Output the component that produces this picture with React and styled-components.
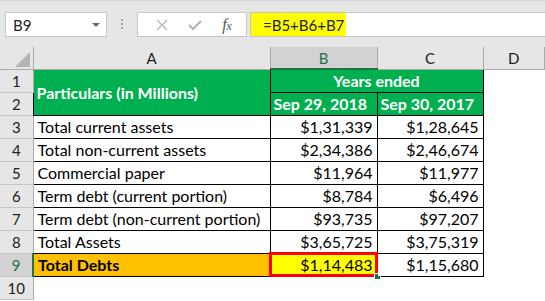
import React from "react";
import styled, { createGlobalStyle } from "styled-components";

const GlobalStyle = createGlobalStyle`
  body {
    margin: 0;
    background: #ffffff;
    font-family: Lato, "Liberation Sans", Arial, sans-serif;
  }
`;

const rows = [
  { label: "Total current assets", b: "$1,31,339", c: "$1,28,645" },
  { label: "Total non-current assets", b: "$2,34,386", c: "$2,46,674" },
  { label: "Commercial paper", b: "$11,964", c: "$11,977" },
  { label: "Term debt (current portion)", b: "$8,784", c: "$6,496" },
  { label: "Term debt (non-current portion)", b: "$93,735", c: "$97,207" },
  { label: "Total Assets", b: "$3,65,725", c: "$3,75,319" },
];

export default function App() {
  return (
    <Page>
      <GlobalStyle />
      <FormulaBar>
        <NameBox>
          <span>B9</span>
          <DropArrow />
        </NameBox>
        <Grip>
          <i />
          <i />
          <i />
        </Grip>
        <FnBox>
          <FnIcon>
            <svg width="12" height="12" viewBox="0 0 12 12">
              <path d="M1 1 L11 11 M11 1 L1 11" stroke="#b3b3b3" strokeWidth="1.3" fill="none" />
            </svg>
          </FnIcon>
          <FnIcon>
            <svg width="14" height="12" viewBox="0 0 14 12">
              <path d="M1 6 L5 10 L13 2" stroke="#b3b3b3" strokeWidth="2" fill="none" />
            </svg>
          </FnIcon>
          <Fx>
            f<small>x</small>
          </Fx>
        </FnBox>
        <FormulaInput>
          <FormulaText>=B5+B6+B7</FormulaText>
        </FormulaInput>
      </FormulaBar>

      <Sheet>
        <colgroup>
          <col style={{ width: 33 }} />
          <col style={{ width: 237 }} />
          <col style={{ width: 107 }} />
          <col style={{ width: 106 }} />
          <col />
        </colgroup>
        <thead>
          <tr>
            <Corner>
              <Triangle />
            </Corner>
            <ColHead>A</ColHead>
            <ColHead $active>B</ColHead>
            <ColHead>C</ColHead>
            <ColHead>D</ColHead>
          </tr>
        </thead>
        <tbody>
          <Row>
            <RowHead>1</RowHead>
            <GreenCell rowSpan={2}>Particulars (in Millions)</GreenCell>
            <GreenCell colSpan={2} $center>
              Years ended
            </GreenCell>
            <Blank />
          </Row>
          <Row>
            <RowHead>2</RowHead>
            <GreenCell>Sep 29, 2018</GreenCell>
            <GreenCell>Sep 30, 2017</GreenCell>
            <Blank />
          </Row>
          {rows.map((r, i) => (
            <Row key={r.label}>
              <RowHead>{i + 3}</RowHead>
              <Cell>{r.label}</Cell>
              <Cell $right>{r.b}</Cell>
              <Cell $right>{r.c}</Cell>
              <Blank />
            </Row>
          ))}
          <Row>
            <RowHead $active>9</RowHead>
            <Cell $fill="#ffc000" $bold>
              Total Debts
            </Cell>
            <Cell $right $fill="#ffff00">
              $1,14,483
              <Selection />
              <FillHandle />
            </Cell>
            <Cell $right>$1,15,680</Cell>
            <Blank />
          </Row>
          <Row>
            <RowHead>10</RowHead>
            <Blank />
            <Blank />
            <Blank />
            <Blank />
          </Row>
        </tbody>
      </Sheet>
    </Page>
  );
}

const Page = styled.div`
  width: 545px;
  height: 301px;
  overflow: hidden;
  background: #ffffff;
`;

const FormulaBar = styled.div`
  display: flex;
  align-items: flex-start;
  height: 47px;
  box-sizing: border-box;
  padding: 11px 0 0 5px;
  background: #e6e6e6;
  border-top: 1px solid #d6d6d6;
`;

const NameBox = styled.div`
  display: flex;
  align-items: center;
  justify-content: space-between;
  width: 102px;
  height: 25px;
  box-sizing: border-box;
  padding: 0 6px 0 7px;
  background: #ffffff;
  border: 1px solid #c6c6c6;
  font-size: 15px;
  color: #222;
`;

const DropArrow = styled.span`
  width: 0;
  height: 0;
  border-left: 4px solid transparent;
  border-right: 4px solid transparent;
  border-top: 4px solid #666;
`;

const Grip = styled.div`
  display: flex;
  flex-direction: column;
  gap: 2px;
  width: 30px;
  align-items: center;
  padding-top: 7px;

  i {
    width: 2px;
    height: 2px;
    background: #a6a6a6;
  }
`;

const FnBox = styled.div`
  display: flex;
  align-items: center;
  justify-content: space-around;
  width: 110px;
  height: 25px;
  box-sizing: border-box;
  padding: 0 4px 0 8px;
  background: #ffffff;
  border: 1px solid #c6c6c6;
`;

const FnIcon = styled.span`
  display: flex;
  align-items: center;
`;

const Fx = styled.span`
  font-family: "Liberation Serif", "Times New Roman", serif;
  font-style: italic;
  font-size: 16px;
  color: #555;

  small {
    font-size: 12px;
  }
`;

const FormulaInput = styled.div`
  flex: 1;
  height: 25px;
  margin-left: 3px;
  box-sizing: border-box;
  background: #ffffff;
  border-top: 1px solid #c6c6c6;
  border-bottom: 1px solid #c6c6c6;
  border-left: 1px solid #c6c6c6;
`;

const FormulaText = styled.span`
  display: inline-flex;
  align-items: center;
  height: 100%;
  width: 95px;
  box-sizing: border-box;
  padding-left: 12px;
  background: #ffff00;
  font-size: 15px;
  color: #222;
`;

const Sheet = styled.table`
  width: 545px;
  table-layout: fixed;
  border-collapse: collapse;
  font-size: 16px;
`;

const Corner = styled.th`
  position: relative;
  height: 21px;
  padding: 0;
  background: #e6e6e6;
  border-right: 1px solid #ababab;
  border-bottom: 1px solid #ababab;
`;

const Triangle = styled.span`
  position: absolute;
  right: 3px;
  bottom: 2px;
  width: 0;
  height: 0;
  border-left: 15px solid transparent;
  border-bottom: 15px solid #b4b4b4;
`;

const ColHead = styled.th`
  height: 21px;
  padding: 0;
  font-weight: normal;
  font-size: 15px;
  text-align: center;
  color: ${({ $active }) => ($active ? "#217346" : "#222")};
  background: ${({ $active }) => ($active ? "#d2d2d2" : "#e6e6e6")};
  border-right: 1px solid #ababab;
  border-bottom: ${({ $active }) =>
    $active ? "2px solid #217346" : "1px solid #ababab"};
`;

const Row = styled.tr`
  height: 23px;
`;

const RowHead = styled.td`
  padding: 0;
  text-align: center;
  font-size: 15px;
  color: ${({ $active }) => ($active ? "#217346" : "#222")};
  background: ${({ $active }) => ($active ? "#d2d2d2" : "#e6e6e6")};
  border-bottom: 1px solid #c6c6c6;
  border-right: ${({ $active }) =>
    $active ? "2px solid #217346" : "1px solid #ababab"};
`;

const GreenCell = styled.td`
  padding: 0 3px;
  background: #00b050;
  color: #ffffff;
  font-weight: bold;
  white-space: nowrap;
  text-align: ${({ $center }) => ($center ? "center" : "left")};
  border: 1px solid #000;
`;

const Cell = styled.td`
  position: relative;
  padding: 0 4px;
  white-space: nowrap;
  color: #000;
  text-align: ${({ $right }) => ($right ? "right" : "left")};
  font-weight: ${({ $bold }) => ($bold ? "bold" : "normal")};
  background: ${({ $fill }) => $fill || "#ffffff"};
  border: 1px solid #000;
`;

const Blank = styled.td`
  padding: 0;
`;

const Selection = styled.span`
  position: absolute;
  top: -2px;
  left: -2px;
  right: -1px;
  bottom: -1px;
  border: 3px solid #ff0000;
  pointer-events: none;
`;

const FillHandle = styled.span`
  position: absolute;
  right: -4px;
  bottom: -4px;
  width: 5px;
  height: 5px;
  background: #217346;
  border: 1px solid #ffffff;
`;
